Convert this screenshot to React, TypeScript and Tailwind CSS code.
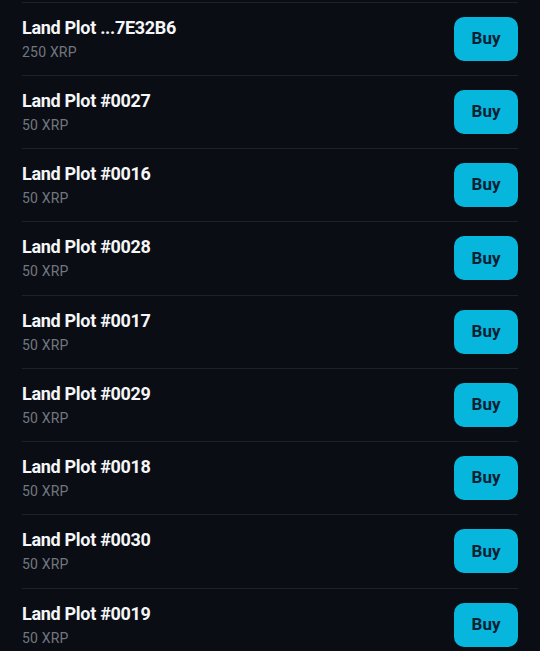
import React from "react";

const plots = [
  { name: "Land Plot ...7E32B6", price: "250 XRP" },
  { name: "Land Plot #0027", price: "50 XRP" },
  { name: "Land Plot #0016", price: "50 XRP" },
  { name: "Land Plot #0028", price: "50 XRP" },
  { name: "Land Plot #0017", price: "50 XRP" },
  { name: "Land Plot #0029", price: "50 XRP" },
  { name: "Land Plot #0018", price: "50 XRP" },
  { name: "Land Plot #0030", price: "50 XRP" },
  { name: "Land Plot #0019", price: "50 XRP" },
];

export default function App() {
  return (
    <div
      className="relative w-[540px] h-[651px] overflow-hidden bg-[#0a0d13]"
      style={{ fontFamily: "Roboto, 'Liberation Sans', sans-serif" }}
    >
      {/* faint page underneath the list */}
      <div className="flex flex-col items-center pt-[128px] px-[30px] text-[#12161d]">
        <div className="w-[60px] h-[40px] rounded bg-[#10131a]" />
        <div className="mt-[120px] text-[15px] leading-[24px] text-center">
          Your connected wallet holds the Land Plot NFT needed to register ownership of this plot in the metaverse district.
        </div>
        <div className="mt-[70px] w-full flex justify-end pr-[100px] text-[15px] font-bold">Lvl 1</div>
        <div className="w-full flex justify-end pr-[100px] text-[14px]">250 mXRP</div>
        <div className="mt-[38px] w-[252px] h-[40px] rounded-md bg-[#0f1218] flex items-center justify-center text-[15px]">
          Verify Land Plot ownership
        </div>
        <div className="mt-[36px] text-[15px]">Remove Land Plot</div>
      </div>

      {/* overlay list */}
      <div className="absolute inset-0 bg-[#0b0e14]/95 pt-[1.5px]">
        <div className="mx-[22px]">
          {plots.map((p) => (
            <div
              key={p.name}
              className="h-[73.25px] border-t border-[#1d232d] flex items-center justify-between"
            >
              <div className="flex flex-col">
                <div className="text-[18px] leading-[22px] font-bold text-[#f5f6f8] tracking-[-0.3px]">
                  {p.name}
                </div>
                <div className="mt-[4px] text-[14px] leading-[18px] text-[#72777f] tracking-[0.2px]">
                  {p.price}
                </div>
              </div>
              <button className="w-[64px] h-[44px] rounded-[10px] bg-[#06b6dc] text-[#0a2031] text-[17px] font-bold flex items-center justify-center">
                Buy
              </button>
            </div>
          ))}
        </div>
      </div>
    </div>
  );
}
